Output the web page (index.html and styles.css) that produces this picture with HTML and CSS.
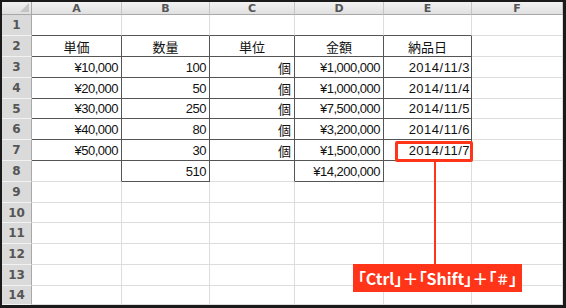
FILE: index.html
```html
<!DOCTYPE html>
<html lang="ja">
<head>
<meta charset="utf-8">
<link rel="stylesheet" href="styles.css">
</head>
<body>
<div class="sheet">
  <div class="grid">
    <div class="corner"><span class="tri"></span></div>
    <div class="ch">A</div><div class="ch">B</div><div class="ch">C</div><div class="ch">D</div><div class="ch">E</div><div class="ch">F</div>

    <div class="rh">1</div>
    <div class="c tb"></div><div class="c tb"></div><div class="c tb"></div><div class="c tb"></div><div class="c tb"></div><div class="c"></div>

    <div class="rh">2</div>
    <div class="c t ctr jp">単価</div><div class="c t ctr jp">数量</div><div class="c t ctr jp">単位</div><div class="c t ctr jp">金額</div><div class="c t ctr jp">納品日</div><div class="c"></div>

    <div class="rh">3</div>
    <div class="c t">¥10,000</div><div class="c t">100</div><div class="c t jp">個</div><div class="c t">¥1,000,000</div><div class="c t date">2014/11/3</div><div class="c"></div>

    <div class="rh">4</div>
    <div class="c t">¥20,000</div><div class="c t">50</div><div class="c t jp">個</div><div class="c t">¥1,000,000</div><div class="c t date">2014/11/4</div><div class="c"></div>

    <div class="rh">5</div>
    <div class="c t">¥30,000</div><div class="c t">250</div><div class="c t jp">個</div><div class="c t">¥7,500,000</div><div class="c t date">2014/11/5</div><div class="c"></div>

    <div class="rh">6</div>
    <div class="c t">¥40,000</div><div class="c t">80</div><div class="c t jp">個</div><div class="c t">¥3,200,000</div><div class="c t date">2014/11/6</div><div class="c"></div>

    <div class="rh">7</div>
    <div class="c t">¥50,000</div><div class="c t">30</div><div class="c t jp">個</div><div class="c t">¥1,500,000</div><div class="c t date">2014/11/7</div><div class="c"></div>

    <div class="rh">8</div>
    <div class="c tr"></div><div class="c t">510</div><div class="c tr"></div><div class="c t">¥14,200,000</div><div class="c"></div><div class="c"></div>

    <div class="rh">9</div>
    <div class="c"></div><div class="c"></div><div class="c"></div><div class="c"></div><div class="c"></div><div class="c"></div>
    <div class="rh">10</div>
    <div class="c"></div><div class="c"></div><div class="c"></div><div class="c"></div><div class="c"></div><div class="c"></div>
    <div class="rh">11</div>
    <div class="c"></div><div class="c"></div><div class="c"></div><div class="c"></div><div class="c"></div><div class="c"></div>
    <div class="rh">12</div>
    <div class="c"></div><div class="c"></div><div class="c"></div><div class="c"></div><div class="c"></div><div class="c"></div>
    <div class="rh">13</div>
    <div class="c"></div><div class="c"></div><div class="c"></div><div class="c"></div><div class="c"></div><div class="c"></div>
    <div class="rh">14</div>
    <div class="c"></div><div class="c"></div><div class="c"></div><div class="c"></div><div class="c"></div><div class="c"></div>
  </div>

  <div class="hl-box"></div>
  <div class="hl-line"></div>
  <div class="hl-label">「Ctrl」＋「Shift」＋「<span class="fw">＃</span>」</div>
</div>
</body>
</html>
```
FILE: styles.css
```css
html, body {
  margin: 0;
  padding: 0;
  background: #ffffff;
}

.sheet {
  position: relative;
  width: 566px;
  height: 308px;
  box-sizing: border-box;
  border-top: 2px solid #1a1a1a;
  border-left: 2px solid #1a1a1a;
  border-right: 3px solid #1a1a1a;
  border-bottom: 3px solid #1a1a1a;
  overflow: hidden;
  font-family: "Liberation Sans", "Noto Sans CJK JP", sans-serif;
}

.grid {
  display: grid;
  grid-template-columns: 30px 90px 88px 85px 89px 88px 91px;
  grid-template-rows: 13px 21px 21px 21px 21px 20px 21px 21px 21px 21px 20px 21px 21px 21px 19px;
}

.corner {
  position: relative;
  background: linear-gradient(#f0f0f0, #dedede);
  border-right: 1px solid #a8a8a8;
  border-bottom: 1px solid #a8a8a8;
}

.tri {
  position: absolute;
  right: 2px;
  bottom: 2px;
  width: 0;
  height: 0;
  border-left: 9px solid transparent;
  border-bottom: 9px solid #c4c4c4;
}

.ch {
  background: linear-gradient(#f2f2f2, #e0e0e0);
  border-right: 1px solid #c4c4c4;
  border-bottom: 1px solid #a8a8a8;
  display: flex;
  align-items: center;
  justify-content: center;
  font-family: "DejaVu Sans", sans-serif;
  font-weight: bold;
  font-size: 11px;
  color: #555555;
  line-height: 1;
}

.rh {
  background: #dadada;
  border-right: 1px solid #a8a8a8;
  border-bottom: 1px solid #f2f2f2;
  display: flex;
  align-items: center;
  justify-content: center;
  font-family: "DejaVu Sans", sans-serif;
  font-weight: bold;
  font-size: 12px;
  color: #555555;
  line-height: 1;
}

.c {
  box-sizing: border-box;
  border-right: 1px solid #dddddd;
  border-bottom: 1px solid #dddddd;
  display: flex;
  align-items: center;
  justify-content: flex-end;
  padding-right: 3px;
  font-size: 13px;
  letter-spacing: -0.5px;
  color: #111111;
  line-height: 1;
  white-space: nowrap;
}

.c.t {
  border-right-color: #555555;
  border-bottom-color: #555555;
}

.c.tb {
  border-bottom-color: #555555;
}

.c.tr {
  border-right-color: #555555;
}

.c.ctr {
  justify-content: center;
  padding-right: 0;
}

.jp {
  font-family: "Noto Sans CJK JP", sans-serif;
  font-size: 13px;
  letter-spacing: 0;
}

.date {
  letter-spacing: 0.5px;
  padding-right: 1px;
}

.hl-box {
  position: absolute;
  left: 393px;
  top: 139px;
  width: 78px;
  height: 21px;
  box-sizing: border-box;
  border: 3px solid #ff3418;
  border-radius: 2px;
}

.hl-line {
  position: absolute;
  left: 432px;
  top: 160px;
  width: 2px;
  height: 102px;
  background: #ff3418;
}

.hl-label {
  position: absolute;
  left: 351px;
  top: 262px;
  width: 169px;
  height: 28px;
  background: #ff3418;
  color: #ffffff;
  display: flex;
  align-items: center;
  justify-content: center;
  font-family: "Noto Sans CJK JP", sans-serif;
  font-feature-settings: "palt";
  font-weight: 600;
  font-size: 16px;
  line-height: 1;
}

.fw {
  font-feature-settings: normal;
  font-size: 13px;
}
```
